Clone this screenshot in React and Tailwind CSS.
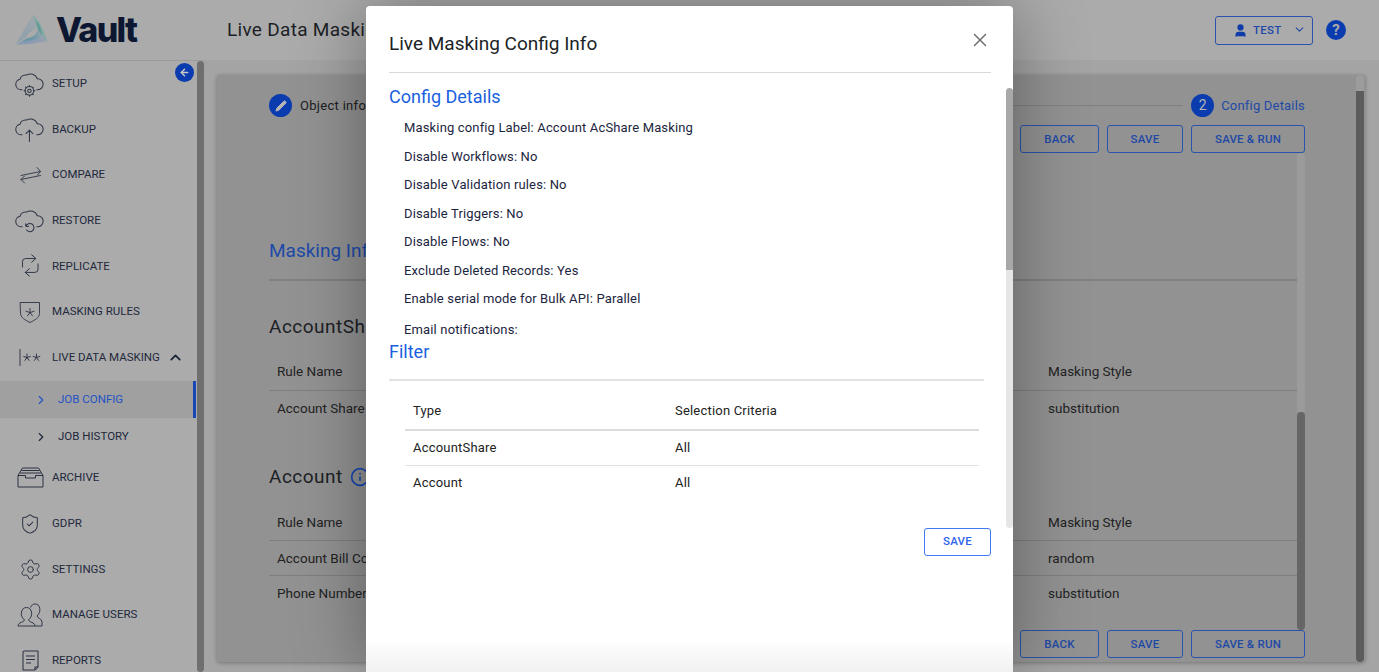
import React from "react";
import { User, ChevronDown, ChevronUp, ChevronRight, X, Pencil, ArrowLeft, Info, ShieldCheck, Settings } from "lucide-react";

const cloud = "M7 18H6.200a4.600 4.600 0 0 1-1-9.100A5.200 5.200 0 0 1 11 5.200a6.400 6.400 0 0 1 9.400 3.200 4.800 4.800 0 0 1 .6 9.600h-1";

function I({ children, w = 32, h = 30, vb = "0 0 28 26" }) {
  return (
    <svg width={w} height={h} viewBox={vb} fill="none" stroke="#2c3344" strokeWidth="0.9" strokeLinecap="round" strokeLinejoin="round">
      {children}
    </svg>
  );
}

const star = (cx, cy) => (
  <g key={cx}>
    <path d={`M${cx} ${cy - 3.5}V${cy}M${cx - 3.300} ${cy - 1}L${cx} ${cy}M${cx + 3.300} ${cy - 1}L${cx} ${cy}M${cx - 2.100} ${cy + 2.900}L${cx} ${cy}M${cx + 2.100} ${cy + 2.900}L${cx} ${cy}`} />
  </g>
);

const icons = {
  setup: (
    <I>
      <path d={cloud} />
      <circle cx="13.500" cy="19" r="3.800" />
      <circle cx="13.500" cy="19" r="1.500" />
      <path d="M13.500 14.300v.9M13.500 22.800v.9M8.800 19h.9M17.300 19h.9M10.200 15.700l.6.6M16.200 21.700l.6.6M16.800 15.700l-.6.6M10.800 21.700l-.6.6" />
    </I>
  ),
  backup: (
    <I>
      <path d={cloud} />
      <path d="M13.500 24V14M10.500 17l3-3 3 3" />
    </I>
  ),
  compare: (
    <I w={28} h={26}>
      <path d="M5 13.500 24.500 9.500M21 5.500l3.500 4-3 3.500" />
      <path d="M24.500 13.500 5 17.500M8.500 14 5 17.500l3.500 3.500" />
    </I>
  ),
  restore: (
    <I>
      <path d={cloud} />
      <path d="M10.500 17.500a3.600 3.600 0 1 1 .5 3.400M10.200 15.500l.3 2.300 2.300-.3" />
    </I>
  ),
  replicate: (
    <I vb="0 0 28 26" w={30} h={28}>
      <path d="M7 14V9a3 3 0 0 1 3-3h9M15.500 2.500 19.500 6l-4 3.500" />
      <path d="M21.500 11v5a3 3 0 0 1-3 3h-9M13.500 15.500 9.500 19l4 3.500" />
    </I>
  ),
  rules: (
    <I w={28} h={26}>
      <path d="M4.500 3.500h19v11c0 4-4.500 6.500-9.500 9-5-2.500-9.500-5-9.500-9z" />
      <path d="M14 9.500v4M14 13.500l-4-1.200M14 13.500l4-1.200M14 13.500l-2.500 3.300M14 13.500l2.500 3.300" />
    </I>
  ),
  live: (
    <svg width="23" height="17" viewBox="0 0 23 17" fill="none" stroke="#2c3344" strokeWidth="0.95" strokeLinecap="round">
      <path d="M1 .5v16" />
      {star(8, 8.500)}
      {star(17.500, 8.500)}
    </svg>
  ),
  archive: (
    <svg width="27" height="21" viewBox="0 0 27 21" fill="none" stroke="#2c3344" strokeWidth="1" strokeLinejoin="round">
      <path d="M1 8.500 5.500 1h16L26 8.500" />
      <path d="M4.500 3.500h18M3 6h21" />
      <path d="M1 8.500h7.500V11h10V8.500H26V20H1z" />
    </svg>
  ),
  users: (
    <svg width="26" height="24" viewBox="0 0 26 24" fill="none" stroke="#2c3344" strokeWidth="0.95" strokeLinejoin="round">
      <path d="M1 23c0-4 6-3.500 6.500-6-3-3-3.500-5-3-8 .5-3 2.500-4.500 5-4.500 2.500 0 4.500 1.500 5 4.500.5 3 0 5-3 8 .5 2.500 6.500 2 6.500 6z" />
      <path d="M13.500 4.500c1-2.500 2.500-3.500 4.500-3.500 2.500 0 4.500 1.500 4.800 4.500.3 3-.3 5-2.800 7.500.5 2.500 5 2.500 5 6V23h-7" />
    </svg>
  ),
  reports: (
    <svg width="17" height="21" viewBox="0 0 17 21" fill="none" stroke="#2c3344" strokeWidth="1.05" strokeLinejoin="round">
      <path d="M3 20H1V2.500A1.500 1.500 0 0 1 2.500 1h13.500v16l-3 3H3z" />
      <path d="M4 6h9M4 9.500h9M4 13h5M13 20v-3h3" />
    </svg>
  ),
};

function NavRow({ icon, label, extra }) {
  return (
    <div className="flex h-[45.6px] items-center">
      <span className="flex w-[52px] shrink-0 items-center justify-center pl-[8px]">{icon}</span>
      <span className="text-[11.5px] text-[#22293c]">{label}</span>
      {extra}
    </div>
  );
}

function OutlineBtn({ children, w }) {
  return (
    <button className={`flex h-[28px] items-center justify-center rounded-[3px] border border-[#2a53ad] pt-[1px] text-[11.5px] font-medium tracking-[0.2px] text-[#1f49a6] ${w}`}>
      {children}
    </button>
  );
}

function ActionRow() {
  return (
    <div className="flex h-[28px] justify-end gap-[8px]">
      <OutlineBtn w="w-[79px]">BACK</OutlineBtn>
      <OutlineBtn w="w-[76px]">SAVE</OutlineBtn>
      <OutlineBtn w="w-[114px]">SAVE &amp; RUN</OutlineBtn>
    </div>
  );
}

function RuleRow({ name, style, border = true, h = "h-[35px]" }) {
  return (
    <div className={`flex items-center text-[13.5px] text-[#222] ${h} ${border ? "border-b border-[#7e7e7e]" : ""}`}>
      <span className="w-[779px] shrink-0 pl-[8px]">{name}</span>
      <span>{style}</span>
    </div>
  );
}

function Logo() {
  const lines = [];
  for (let i = 0; i < 26; i++) {
    const t = i / 25;
    lines.push(<path key={i} d={`M${18 + t * 6} ${1 + t * 12} Q${8 + t * 6} ${18 - t * 2} ${1 + t * 9} ${30 - t * 6}`} stroke="#8aa0ac" strokeWidth="0.3" fill="none" />);
    lines.push(<path key={`b${i}`} d={`M${2 + t * 10} ${30.500 - t * 6} Q${18 + t * 2} ${30 - t * 6} ${32 - t * 9} ${27 - t * 11}`} stroke={t < 0.5 ? "#7d96b4" : "#5a93a8"} strokeWidth="0.3" fill="none" />);
    lines.push(<path key={`c${i}`} d={`M${18 + t * 4} ${1 + t * 10} Q${26 - t * 3} ${8 + t * 3} ${32 - t * 9} ${27 - t * 11}`} stroke={t > 0.5 ? "#4f9a8e" : "#7eaaa4"} strokeWidth="0.3" fill="none" />);
  }
  return (
    <svg width="33" height="32" viewBox="0 0 33 32">
      {lines}
    </svg>
  );
}

export default function App() {
  return (
    <div className="relative flex h-screen w-full flex-col overflow-hidden bg-[#a4a4a4] font-['Roboto',sans-serif]">
      <header className="flex h-[60px] shrink-0 items-center bg-[#ababab]">
        <div className="flex w-[227px] shrink-0 items-center pl-[15px]">
          <Logo />
          <span className="ml-[8px] font-['Inter',sans-serif] text-[34px] font-extrabold leading-[60px] tracking-[-1.7px] text-[#0d1731]">Vault</span>
        </div>
        <h1 className="whitespace-nowrap text-[19px] tracking-[0.3px] text-[#1c1f26]">Live Data Masking</h1>
        <div className="ml-auto flex items-center pr-[33px]">
          <button className="flex h-[29px] w-[98px] items-center rounded-[3px] border border-[#2a53ad] pl-[17px] pt-[1px] text-[11.5px] font-medium tracking-[0.3px] text-[#1f49a6]">
            <User size={15} fill="#0f3ca8" stroke="#0f3ca8" />
            <span className="ml-[5px]">TEST</span>
            <ChevronDown size={13} className="ml-[11px] mb-[3px]" />
          </button>
          <span className="ml-[13px] flex h-[20px] w-[20px] items-center justify-center rounded-full bg-[#0a3cb0] text-[15px] font-bold text-[#ababab]">?</span>
        </div>
      </header>

      <div className="flex min-h-0 flex-1">
        <aside className="relative flex w-[204px] shrink-0 border-t border-[#9a9a9a] bg-[#ababab]">
          <nav className="h-[640px] w-[197px] shrink-0">
            <NavRow icon={icons.setup} label="SETUP" />
            <NavRow icon={icons.backup} label="BACKUP" />
            <NavRow icon={icons.compare} label="COMPARE" />
            <NavRow icon={icons.restore} label="RESTORE" />
            <NavRow icon={icons.replicate} label="REPLICATE" />
            <NavRow icon={icons.rules} label="MASKING RULES" />
            <NavRow
              icon={icons.live}
              label="LIVE DATA MASKING"
              extra={<ChevronUp size={17} strokeWidth={2.4} className="ml-[7px] text-[#1b2336]" />}
            />
            <div className="mr-[1px] mt-[1px] flex h-[37px] items-center border-r-[3px] border-[#1647b4] bg-[#a0a0a0] pl-[34px] text-[11.5px] text-[#1f52c4]">
              <ChevronRight size={14} />
              <span className="ml-[10px]">JOB CONFIG</span>
            </div>
            <div className="flex h-[37px] items-center pl-[34px] text-[11.5px] text-[#22293c]">
              <ChevronRight size={14} />
              <span className="ml-[10px]">JOB HISTORY</span>
            </div>
            <NavRow icon={icons.archive} label="ARCHIVE" />
            <NavRow icon={<ShieldCheck size={22} strokeWidth={1.1} color="#2c3344" />} label="GDPR" />
            <NavRow icon={<Settings size={23} strokeWidth={1} color="#2c3344" />} label="SETTINGS" />
            <NavRow icon={icons.users} label="MANAGE USERS" />
            <NavRow icon={icons.reports} label="REPORTS" />
          </nav>
          <div className="w-[7px] rounded-[4px] bg-[#6f6f6f]" />
          <span className="absolute left-[175px] top-[2px] flex h-[19px] w-[19px] items-center justify-center rounded-full bg-[#0a3cb0]">
            <ArrowLeft size={11} strokeWidth={3.2} color="#c8c8c8" />
          </span>
        </aside>

        <main className="min-w-0 flex-1 pb-[10px] pl-[13px] pr-[14px] pt-[15px]">
          <section className="flex h-full rounded-[3px] bg-[#929292] shadow-[0_1px_4px_rgba(0,0,0,0.3)]">
            <div className="flex min-w-0 flex-1 flex-col pl-[52px] pr-[51px]">
              <div className="mt-[18px] flex h-[25px] items-center">
                <span className="flex h-[23px] w-[23px] items-center justify-center rounded-full bg-[#0a3cb0]">
                  <Pencil size={12} fill="#b5b5b5" stroke="#b5b5b5" />
                </span>
                <span className="ml-[8px] whitespace-nowrap text-[13px] tracking-[0.3px] text-[#1d1d1d]">Object info</span>
                <span className="ml-[8px] h-px flex-1 bg-[#808080]" />
                <span className="ml-[8px] flex h-[23px] w-[23px] items-center justify-center rounded-full bg-[#0a3cb0] text-[14px] text-[#b5b5b5]">2</span>
                <span className="ml-[7px] whitespace-nowrap text-[13px] tracking-[0.2px] text-[#1f49a6]">Config Details</span>
              </div>
              <div className="mt-[7px]"><ActionRow /></div>
              <div className="flex min-h-0 flex-1">
                <div className="min-w-0 flex-1 overflow-hidden">
                  <h2 className="mt-[84px] h-[28px] text-[19px] leading-[28px] text-[#1d4aa8]">Masking Info</h2>
                  <div className="mt-[14px] border-t-2 border-[#808080]" />
                  <h3 className="mt-[32px] h-[28px] text-[19px] leading-[28px] tracking-[0.5px] text-[#1c1f26]">AccountShare</h3>
                  <RuleRow name="Rule Name" style="Masking Style" h="mt-[12px] h-[38px]" />
                  <RuleRow name="Account Share" style="substitution" border={false} />
                  <h3 className="mt-[37px] flex h-[28px] items-center text-[19px] leading-[28px] tracking-[0.5px] text-[#1c1f26]">
                    Account
                    <Info size={20} strokeWidth={2} className="ml-[7px] text-[#1647b4]" />
                  </h3>
                  <RuleRow name="Rule Name" style="Masking Style" h="mt-[13px] h-[37px]" />
                  <RuleRow name="Account Bill Contact" style="random" />
                  <RuleRow name="Phone Number" style="substitution" border={false} />
                </div>
                <div className="flex w-[8px] shrink-0 flex-col">
                  <div className="flex-1 rounded-t-[4px] bg-[#9b9b9b]" />
                  <div className="h-[218px] rounded-[4px] bg-[#666666]" />
                </div>
              </div>
              <ActionRow />
              <div className="h-[4px]" />
            </div>
            <div className="mr-[1px] flex w-[8px] shrink-0 flex-col">
              <div className="h-[16px] rounded-t-[4px] bg-[#9c9c9c]" />
              <div className="flex-1 rounded-b-[4px] bg-[#5c5c5c]" />
            </div>
          </section>
        </main>
      </div>

      <div className="absolute bottom-0 left-[366px] top-[6px] w-[647px] overflow-hidden rounded-t-[4px] bg-gradient-to-b from-white from-[95%] to-[#f1f1f1] pl-[23px] pr-[22px] shadow-[0_0_70px_rgba(0,0,0,0.36)]">
        <div className="flex h-[67px] items-center justify-between border-b border-[#d9d9d9] pt-[10px]">
          <h2 className="text-[19px] text-[#1c1f26]">Live Masking Config Info</h2>
          <X size={22} strokeWidth={1.6} className="mb-[8px] text-[#6f6f6f]" />
        </div>
        <h3 className="mt-[9px] h-[30px] text-[18px] leading-[30px] text-[#1a5fe0]">Config Details</h3>
        <div className="mt-[2px] pl-[15px] text-[13px] tracking-[0.15px] text-[#1c2540]">
          {[
            "Masking config Label: Account AcShare Masking",
            "Disable Workflows: No",
            "Disable Validation rules: No",
            "Disable Triggers: No",
            "Disable Flows: No",
            "Exclude Deleted Records: Yes",
            "Enable serial mode for Bulk API: Parallel",
          ].map((t) => (
            <div key={t} className="h-[28.5px] leading-[28.5px]">{t}</div>
          ))}
          <div className="mt-[5px] h-[22px] leading-[22px]">Email notifications:</div>
        </div>
        <h3 className="h-[22px] text-[18px] leading-[22px] text-[#1a5fe0]">Filter</h3>
        <div className="mt-[16px] w-[595px] border-t-2 border-[#e2e2e2]" />
        <div className="ml-[16px] w-[574px] text-[13px] tracking-[0.2px] text-[#222]">
          <div className="flex h-[50px] items-center border-b-2 border-[#dcdcdc] pt-[12px]">
            <span className="w-[270px] pl-[8px]">Type</span><span>Selection Criteria</span>
          </div>
          <div className="flex h-[35px] items-center border-b border-[#e2e2e2] pt-[1px]">
            <span className="w-[270px] pl-[8px]">AccountShare</span><span>All</span>
          </div>
          <div className="flex h-[35px] items-center">
            <span className="w-[270px] pl-[8px]">Account</span><span>All</span>
          </div>
        </div>
        <div className="mt-[27px] flex justify-end">
          <button className="h-[28px] w-[67px] rounded-[3px] border border-[#3f78f2] pt-[1px] text-[11.5px] font-medium tracking-[0.2px] text-[#2f66e8]">SAVE</button>
        </div>
        <div className="absolute right-0 top-[82px] flex h-[440px] w-[7px] flex-col">
          <div className="h-[182px] rounded-t-[4px] bg-[#a8a8a8]" />
          <div className="flex-1 rounded-b-[4px] bg-[#e6e6e6]" />
        </div>
      </div>
    </div>
  );
}
